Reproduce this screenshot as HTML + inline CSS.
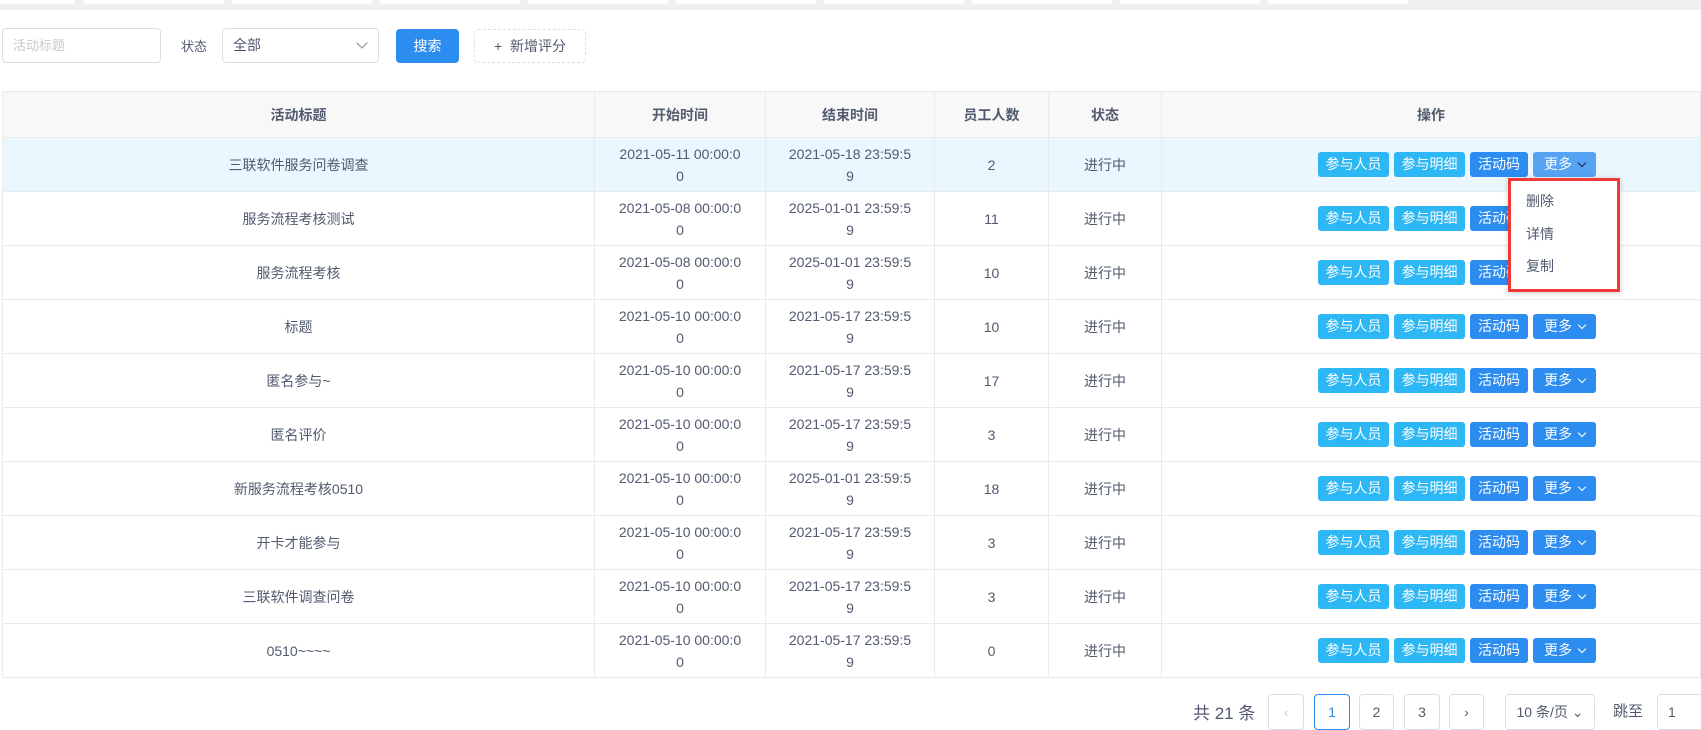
<!DOCTYPE html>
<html><head><meta charset="utf-8"><style>
*{box-sizing:border-box;margin:0;padding:0}
body{width:1701px;height:714px;overflow:hidden;background:#fff;font-family:"Liberation Sans","Noto Sans CJK SC",sans-serif;font-size:14px;color:#515a6e;position:relative}
.abs{position:absolute}
.topbar{left:0;top:0;width:1701px;height:10px;background:#f0f0f0}
.tab{top:0;height:4px;background:#fff;border-radius:0 0 3px 3px}
.inp{border:1px solid #dcdee2;border-radius:4px;background:#fff}
table{position:absolute;left:2px;top:91px;width:1699px;border-collapse:collapse;table-layout:fixed}
td,th{border:1px solid #e8eaec;text-align:center;line-height:22px}
th{height:46px;background:#f8f8f9;font-weight:bold;color:#515a6e;font-size:14px}
td{height:54px;font-size:14px}
td.op{padding-left:52px;white-space:nowrap}
tr.hl td{background:#ebf7ff}
.b{display:inline-block;height:25px;line-height:25px;color:#fff;border-radius:3px;font-size:14px;vertical-align:middle;margin:0 2.5px}
.c{background:#2db7f5;width:71px}
.p{background:#2d8cf0;width:58px}
.m{background:#2d8cf0;width:63px}
.m i{display:inline-block;width:6px;height:6px;border-right:1.6px solid #fff;border-bottom:1.6px solid #fff;transform:rotate(45deg);margin-left:7px;position:relative;top:-3px}
.pg{top:694px;height:36px;border:1px solid #dcdee2;border-radius:4px;text-align:center;line-height:34px;font-size:14px}
</style></head><body>
<div class="abs topbar"></div>
<div class="abs tab" style="left:0;width:75px"></div>
<div class="abs tab" style="left:84px;width:140px"></div>
<div class="abs tab" style="left:232px;width:140px"></div>
<div class="abs tab" style="left:380px;width:140px"></div>
<div class="abs tab" style="left:528px;width:140px"></div>
<div class="abs tab" style="left:676px;width:140px"></div>
<div class="abs tab" style="left:824px;width:140px"></div>
<div class="abs tab" style="left:972px;width:140px"></div>
<div class="abs tab" style="left:1120px;width:140px"></div>
<div class="abs tab" style="left:1268px;width:140px"></div>

<div class="abs inp" style="left:2px;top:28px;width:159px;height:35px;padding-left:10px;line-height:33px;color:#c5c8ce;font-size:13px">活动标题</div>
<div class="abs" style="left:181px;top:36px;font-size:13px">状态</div>
<div class="abs inp" style="left:222px;top:28px;width:157px;height:35px;padding-left:10px;line-height:33px;color:#515a6e;font-size:14px">全部
<span class="abs" style="right:12px;top:10px;width:8px;height:8px;border-right:1.3px solid #808695;border-bottom:1.3px solid #808695;transform:rotate(45deg)"></span></div>
<div class="abs" style="left:396px;top:29px;width:63px;height:34px;background:#2d8cf0;border-radius:4px;color:#fff;text-align:center;line-height:34px;font-size:14px">搜索</div>
<div class="abs" style="left:474px;top:29px;width:112px;height:34px;border:1px dashed #dcdee2;border-radius:4px;text-align:center;line-height:32px;font-size:14px;color:#515a6e">+&nbsp;&nbsp;新增评分</div>

<table>
<colgroup><col style="width:592px"><col style="width:171px"><col style="width:169px"><col style="width:114px"><col style="width:113px"><col></colgroup>
<tr><th>活动标题</th><th>开始时间</th><th>结束时间</th><th>员工人数</th><th>状态</th><th>操作</th></tr>
<tr class="hl"><td>三联软件服务问卷调查</td><td>2021-05-11 00:00:0<br>0</td><td>2021-05-18 23:59:5<br>9</td><td>2</td><td>进行中</td><td class="op"><span class="b c">参与人员</span><span class="b c">参与明细</span><span class="b p">活动码</span><span class="b m" style="background:#57a3f3">更多<i style="border-color:#17233d"></i></span></td></tr>
<tr><td>服务流程考核测试</td><td>2021-05-08 00:00:0<br>0</td><td>2025-01-01 23:59:5<br>9</td><td>11</td><td>进行中</td><td class="op"><span class="b c">参与人员</span><span class="b c">参与明细</span><span class="b p">活动码</span><span class="b m">更多<i></i></span></td></tr>
<tr><td>服务流程考核</td><td>2021-05-08 00:00:0<br>0</td><td>2025-01-01 23:59:5<br>9</td><td>10</td><td>进行中</td><td class="op"><span class="b c">参与人员</span><span class="b c">参与明细</span><span class="b p">活动码</span><span class="b m">更多<i></i></span></td></tr>
<tr><td>标题</td><td>2021-05-10 00:00:0<br>0</td><td>2021-05-17 23:59:5<br>9</td><td>10</td><td>进行中</td><td class="op"><span class="b c">参与人员</span><span class="b c">参与明细</span><span class="b p">活动码</span><span class="b m">更多<i></i></span></td></tr>
<tr><td>匿名参与~</td><td>2021-05-10 00:00:0<br>0</td><td>2021-05-17 23:59:5<br>9</td><td>17</td><td>进行中</td><td class="op"><span class="b c">参与人员</span><span class="b c">参与明细</span><span class="b p">活动码</span><span class="b m">更多<i></i></span></td></tr>
<tr><td>匿名评价</td><td>2021-05-10 00:00:0<br>0</td><td>2021-05-17 23:59:5<br>9</td><td>3</td><td>进行中</td><td class="op"><span class="b c">参与人员</span><span class="b c">参与明细</span><span class="b p">活动码</span><span class="b m">更多<i></i></span></td></tr>
<tr><td>新服务流程考核0510</td><td>2021-05-10 00:00:0<br>0</td><td>2025-01-01 23:59:5<br>9</td><td>18</td><td>进行中</td><td class="op"><span class="b c">参与人员</span><span class="b c">参与明细</span><span class="b p">活动码</span><span class="b m">更多<i></i></span></td></tr>
<tr><td>开卡才能参与</td><td>2021-05-10 00:00:0<br>0</td><td>2021-05-17 23:59:5<br>9</td><td>3</td><td>进行中</td><td class="op"><span class="b c">参与人员</span><span class="b c">参与明细</span><span class="b p">活动码</span><span class="b m">更多<i></i></span></td></tr>
<tr><td>三联软件调查问卷</td><td>2021-05-10 00:00:0<br>0</td><td>2021-05-17 23:59:5<br>9</td><td>3</td><td>进行中</td><td class="op"><span class="b c">参与人员</span><span class="b c">参与明细</span><span class="b p">活动码</span><span class="b m">更多<i></i></span></td></tr>
<tr><td>0510~~~~</td><td>2021-05-10 00:00:0<br>0</td><td>2021-05-17 23:59:5<br>9</td><td>0</td><td>进行中</td><td class="op"><span class="b c">参与人员</span><span class="b c">参与明细</span><span class="b p">活动码</span><span class="b m">更多<i></i></span></td></tr>
</table>

<div class="abs" style="left:1508px;top:178px;width:112px;height:114px;border:3px solid #f03a3a;background:#fff;box-shadow:0 1px 6px rgba(0,0,0,.2)">
<div style="position:absolute;left:15px;top:10px;font-size:14px;line-height:20px">删除</div>
<div style="position:absolute;left:15px;top:43px;font-size:14px;line-height:20px">详情</div>
<div style="position:absolute;left:15px;top:75px;font-size:14px;line-height:20px">复制</div>
</div>

<div class="abs" style="left:1193px;top:699px;font-size:17px">共 21 条</div>
<div class="abs pg" style="left:1268px;width:36px;color:#c5c8ce">‹</div>
<div class="abs pg" style="left:1314px;width:36px;border-color:#2d8cf0;color:#2d8cf0;top:694px">1</div>
<div class="abs pg" style="left:1359px;width:35px">2</div>
<div class="abs pg" style="left:1404px;width:36px">3</div>
<div class="abs pg" style="left:1449px;width:35px">›</div>
<div class="abs pg" style="left:1505px;width:90px">10 条/页 ⌄</div>
<div class="abs" style="left:1613px;top:700px;font-size:15px">跳至</div>
<div class="abs pg" style="left:1657px;width:50px;text-align:left;padding-left:10px">1</div>
</body></html>
